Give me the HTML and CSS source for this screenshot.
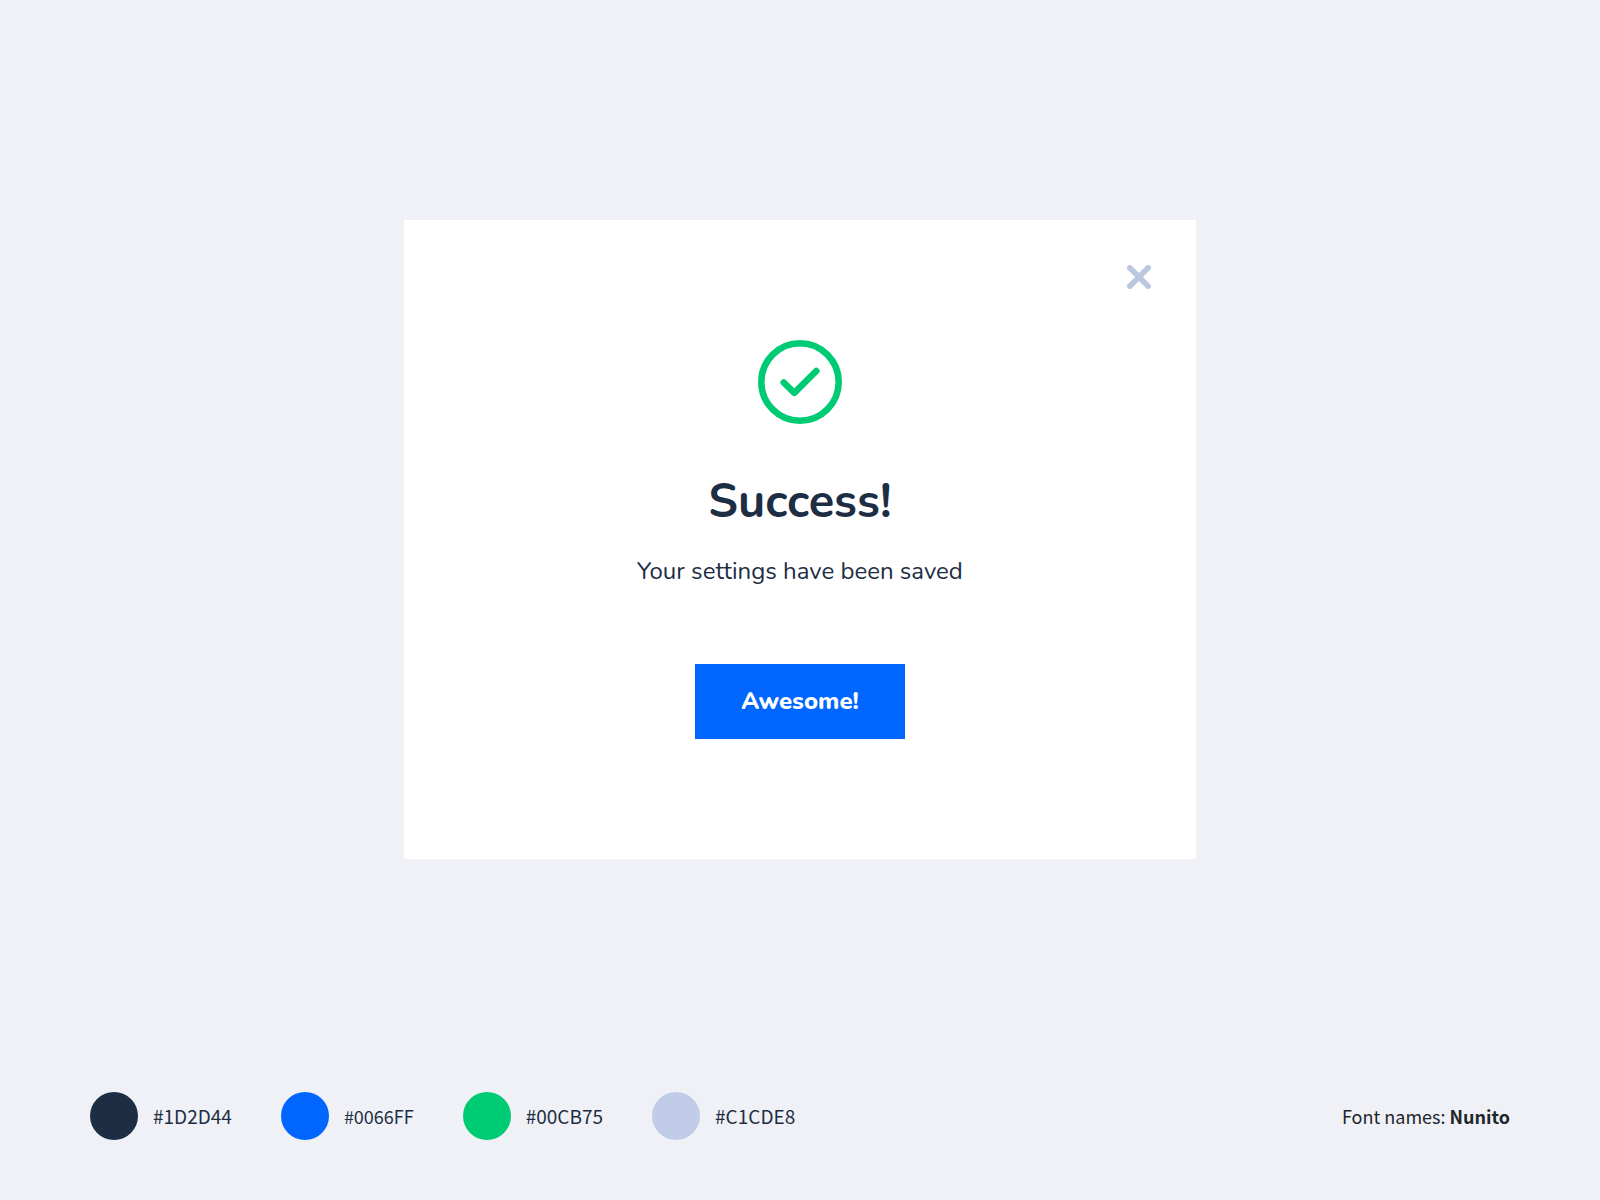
FILE: index.html
```html
<!DOCTYPE html>
<html lang="en">
<head>
  <meta charset="UTF-8">
  <meta name="viewport" content="width=device-width, initial-scale=1">
  <title>Success</title>
  <link rel="stylesheet" href="styles.css">
</head>
<body>

  <main>
    <div class="modal" role="dialog" aria-labelledby="modal-title">
      <button class="close" type="button" aria-label="Close">
        <svg width="24" height="24" viewBox="0 0 24 24">
          <path d="M2.8 2.8 L21.2 21.2 M21.2 2.8 L2.8 21.2" />
        </svg>
      </button>
      <svg class="check" width="84" height="84" viewBox="0 0 84 84" aria-hidden="true">
        <circle cx="42" cy="42" r="38.7" />
        <path d="M25.7 42.5 L36.3 52.8 L58.3 31" />
      </svg>
      <h1 id="modal-title">Success!</h1>
      <p>Your settings have been saved</p>
      <button class="confirm" type="button">Awesome!</button>
    </div>
  </main>

  <footer>
    <ul class="colors">
      <li><span class="dot navy"></span>#1D2D44</li>
      <li class="small"><span class="dot blue"></span>#0066FF</li>
      <li><span class="dot green"></span>#00CB75</li>
      <li><span class="dot lavender"></span>#C1CDE8</li>
    </ul>
    <div class="fonts">Font names: <strong>Nunito</strong></div>
  </footer>

</body>
</html>
```
FILE: styles.css
```css
* {
  box-sizing: border-box;
}
body {
  margin: 0;
  min-height: 100vh;
  display: flex;
  flex-direction: column;
  background-color: #eff1f7;
  color: #1d2d44;
  font-family: Nunito, Lato, sans-serif;
}
main {
  flex: 1;
  display: flex;
  align-items: center;
  justify-content: center;
}
.modal {
  position: relative;
  width: 100%;
  max-width: 792px;
  padding: 120px 45px;
  display: flex;
  flex-direction: column;
  align-items: center;
  background-color: #fff;
  text-align: center;
}
button {
  border: none;
  cursor: pointer;
  font-family: inherit;
}
.close {
  position: absolute;
  top: 45px;
  right: 45px;
  padding: 0;
  background: none;
}
.close svg {
  display: block;
  fill: none;
  stroke: #bbc7df;
  stroke-width: 5.6;
  stroke-linecap: round;
}
.check {
  fill: none;
  stroke: #00cb75;
  stroke-width: 6.6;
  stroke-linecap: round;
  stroke-linejoin: round;
}
h1 {
  margin: 46px 0 0;
  font-size: 47px;
  line-height: 64px;
  font-weight: 700;
}
p {
  margin: 21px 0 0;
  font-size: 24px;
  line-height: 32px;
}
.confirm {
  margin-top: 77px;
  padding: 20px 45px;
  min-width: 210px;
  background-color: #06f;
  color: #fff;
  font-size: 24px;
  line-height: 35px;
  font-weight: 800;
}
footer {
  display: flex;
  align-items: center;
  justify-content: space-between;
  padding: 13px 90px 60px;
  font-family: "Noto Sans CJK SC", sans-serif;
  font-size: 19px;
  line-height: 28px;
}
.colors {
  display: flex;
  gap: 49px;
  margin: 0;
  padding: 0;
  list-style: none;
}
.colors li {
  display: flex;
  align-items: center;
  gap: 15px;
}
.colors .small {
  font-size: 18px;
}
.dot {
  width: 48px;
  height: 48px;
  border-radius: 50%;
}
.navy {
  background-color: #1d2d44;
}
.blue {
  background-color: #06f;
}
.green {
  background-color: #00cb75;
}
.lavender {
  background-color: #c1cde8;
}
.fonts {
  color: #1d262b;
  font-size: 18px;
}
```
